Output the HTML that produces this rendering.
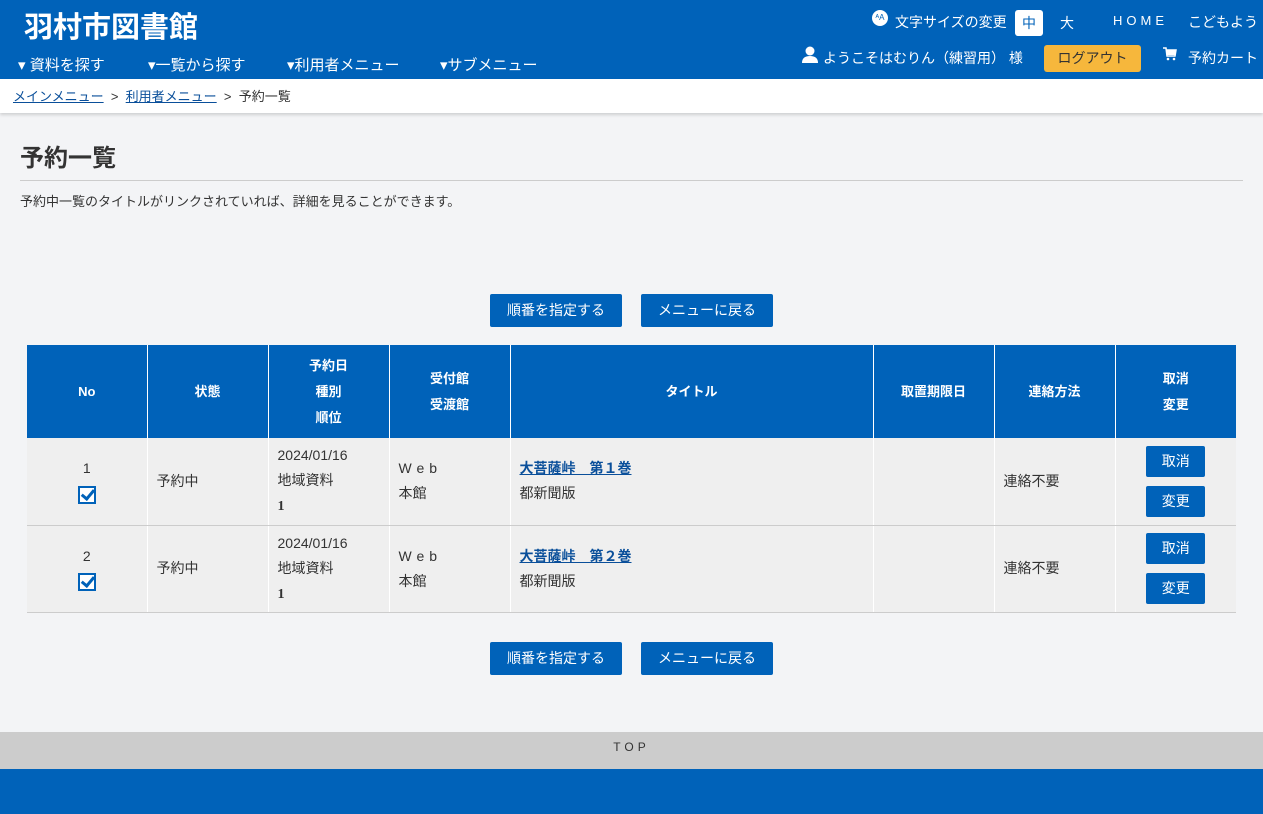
<!DOCTYPE html>
<html><head><meta charset="utf-8"><style>
*{margin:0;padding:0;box-sizing:border-box}
body{width:1263px;height:814px;background:#f3f4f6;font-family:"Liberation Sans","Noto Sans CJK JP",sans-serif;color:#333;position:relative;overflow:hidden;font-size:14px}
.a{position:absolute;white-space:nowrap}
#hd{position:absolute;left:0;top:0;width:1263px;height:79px;background:#0062b9;color:#fff}
#bc{position:absolute;left:0;top:79px;width:1263px;height:34px;background:#fff;box-shadow:0 2px 3px rgba(0,0,0,.15);font-size:13px}
#bc a{color:#0a4f9a;text-decoration:underline}
.btn{position:absolute;background:#0062b9;color:#fff;font-size:14px;text-align:center;border-radius:2px;line-height:33px;height:33px}
table{position:absolute;left:27px;top:345px;border-collapse:collapse;table-layout:fixed;width:1209px}
th{background:#0062b9;color:#fff;font-size:13px;font-weight:bold;height:93px;border-right:1px solid #fff;line-height:26px}
td{background:#efefef;height:87px;border-right:1px solid #fff;border-bottom:1px solid #ccc;font-size:14px;padding-left:9px;line-height:25px;vertical-align:middle}
th:last-child,td:last-child{border-right:none}
.cb{display:inline-block;width:18px;height:18px;background:#0062b9;position:relative;vertical-align:middle}
.cb:after{content:"";position:absolute;left:2px;top:2px;width:14px;height:14px;background:#fff}
.cb:before{content:"";position:absolute;z-index:1;left:6px;top:1px;width:5px;height:10px;border:solid #0062b9;border-width:0 3px 3px 0;transform:rotate(40deg)}
.sb{display:block;width:59px;height:31px;line-height:31px;margin:0 auto;background:#0062b9;color:#fff;text-align:center;font-size:14px;border-radius:2px}
a.t{color:#0a4f9a;font-weight:bold;text-decoration:underline}
</style></head><body>
<div id="hd">
<div class="a" style="left:24px;top:4px;font-size:29px;font-weight:bold">羽村市図書館</div>
<div class="a" style="left:18px;top:54px;font-size:15px">▾ 資料を探す</div>
<div class="a" style="left:148px;top:54px;font-size:15px">▾一覧から探す</div>
<div class="a" style="left:287px;top:54px;font-size:15px">▾利用者メニュー</div>
<div class="a" style="left:440px;top:54px;font-size:15px">▾サブメニュー</div>
<div class="a" style="left:872px;top:10px;width:16px;height:16px;border-radius:50%;background:#fff;color:#0062b9;font-size:8px;text-align:center;line-height:16px">ᴬA</div>
<div class="a" style="left:895px;top:12px;font-size:14px">文字サイズの変更</div>
<div class="a" style="left:1015px;top:10px;width:28px;height:26px;background:#fff;color:#0062b9;border-radius:3px;text-align:center;line-height:26px;font-size:14px">中</div>
<div class="a" style="left:1060px;top:13px;font-size:14px">大</div>
<div class="a" style="left:1113px;top:13px;font-size:13px;letter-spacing:4px">HOME</div>
<div class="a" style="left:1188px;top:12px;font-size:14px">こどもよう</div>
<svg class="a" style="left:801px;top:46px" width="18" height="17" viewBox="0 0 18 17"><circle cx="9" cy="5" r="4.5" fill="#fff"/><path d="M1 17 Q1 10 9 10 Q17 10 17 17Z" fill="#fff"/></svg>
<div class="a" style="left:823px;top:48px;font-size:14px">ようこそはむりん（練習用） 様</div>
<div class="a" style="left:1044px;top:45px;width:97px;height:27px;background:#f6b73c;color:#333;border-radius:3px;text-align:center;line-height:27px;font-size:14px">ログアウト</div>
<svg class="a" style="left:1163px;top:47px" width="14" height="14" viewBox="0 0 14 14"><path d="M0 1H3L4 9H12L13 3H4" fill="none" stroke="#fff" stroke-width="1.5"/><rect x="4" y="3.5" width="8" height="4.5" fill="#fff"/><circle cx="5" cy="12" r="1.3" fill="#fff"/><circle cx="11" cy="12" r="1.3" fill="#fff"/></svg>
<div class="a" style="left:1188px;top:48px;font-size:14px">予約カート</div>
</div>
<div id="bc"><div class="a" style="left:13px;top:7px"><a>メインメニュー</a> &nbsp;&gt;&nbsp; <a>利用者メニュー</a> &nbsp;&gt;&nbsp; 予約一覧</div></div>
<div class="a" style="left:20px;top:138px;font-size:24px;font-weight:bold">予約一覧</div>
<div class="a" style="left:20px;top:180px;width:1223px;height:1px;background:#ccc"></div>
<div class="a" style="left:20px;top:191px;font-size:13px">予約中一覧のタイトルがリンクされていれば、詳細を見ることができます。</div>
<div class="btn" style="left:490px;top:294px;width:132px">順番を指定する</div>
<div class="btn" style="left:641px;top:294px;width:132px">メニューに戻る</div>
<table>
<colgroup><col style="width:120px"><col style="width:121px"><col style="width:121px"><col style="width:121px"><col style="width:363px"><col style="width:121px"><col style="width:121px"><col style="width:121px"></colgroup>
<tr><th>No</th><th>状態</th><th>予約日<br>種別<br>順位</th><th>受付館<br>受渡館</th><th>タイトル</th><th>取置期限日</th><th>連絡方法</th><th>取消<br>変更</th></tr>
<tr><td style="text-align:center;padding:0">1<br><span class="cb"></span></td><td>予約中</td><td>2024/01/16<br>地域資料<br><b style="font-family:'Liberation Serif',serif">1</b></td><td><span style="letter-spacing:5px">Web</span><br>本館</td><td><a class="t">大菩薩峠　第１巻</a><br>都新聞版</td><td></td><td>連絡不要</td><td style="padding:0"><span class="sb">取消</span><span class="sb" style="margin-top:9px">変更</span></td></tr>
<tr><td style="text-align:center;padding:0">2<br><span class="cb"></span></td><td>予約中</td><td>2024/01/16<br>地域資料<br><b style="font-family:'Liberation Serif',serif">1</b></td><td><span style="letter-spacing:5px">Web</span><br>本館</td><td><a class="t">大菩薩峠　第２巻</a><br>都新聞版</td><td></td><td>連絡不要</td><td style="padding:0"><span class="sb">取消</span><span class="sb" style="margin-top:9px">変更</span></td></tr>
</table>
<div class="btn" style="left:490px;top:642px;width:132px">順番を指定する</div>
<div class="btn" style="left:641px;top:642px;width:132px">メニューに戻る</div>
<div class="a" style="left:0;top:732px;width:1263px;height:37px;background:#ccc;text-align:center;line-height:31px;font-size:12px;letter-spacing:4px">TOP</div>
<div class="a" style="left:0;top:769px;width:1263px;height:45px;background:#0062b9"></div>
</body></html>
